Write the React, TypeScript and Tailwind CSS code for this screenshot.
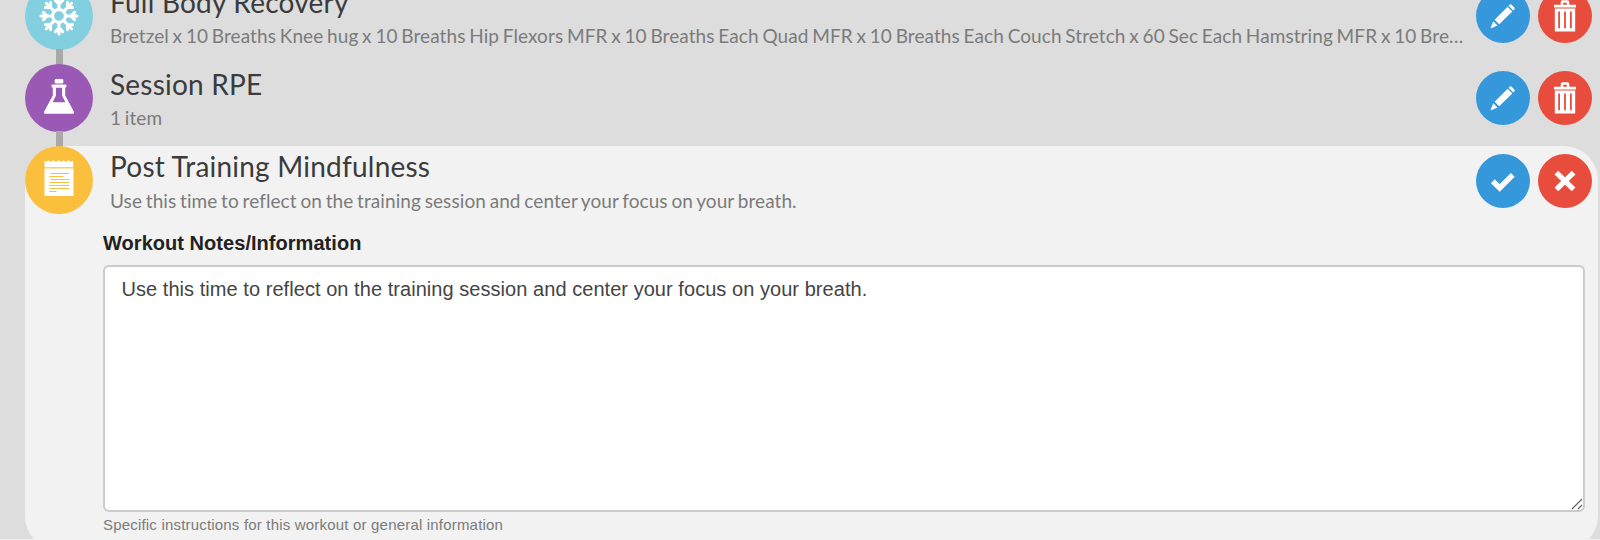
import { useState } from 'react';
import type { ReactNode } from 'react';

type IconProps = { className?: string };

function SnowflakeIcon({ className }: IconProps) {
  return (
    <svg viewBox="-20 -20 40 40" className={className} fill="none" stroke="currentColor" strokeWidth="3.1" strokeLinecap="round">
      <circle r="6.4" />
      {[0, 45, 90, 135, 180, 225, 270, 315].map((deg) => (
        <path key={deg} transform={`rotate(${deg})`} d="M0-7V-18M-3.6-15.6L0-12L3.6-15.6" />
      ))}
    </svg>
  );
}

function FlaskIcon({ className }: IconProps) {
  return (
    <svg viewBox="0 0 40 40" className={className} fill="currentColor">
      <rect x="15.7" y="1" width="8.6" height="4.6" rx="1.4" />
      <rect x="12.6" y="6.6" width="14.8" height="3" rx="0.8" />
      <path
        fillRule="evenodd"
        d="M13.8 9H26.2V17.5L34.8 33.4Q35.6 35.7 33.4 35.7H6.6Q4.4 35.7 5.2 33.4L13.8 17.5ZM16.9 9.6V17.8L13.6 24.2H26.4L23.1 17.8V9.6Z"
      />
    </svg>
  );
}

function NoteIcon({ className }: IconProps) {
  return (
    <svg viewBox="0 0 30 36" className={className} fill="currentColor">
      <path d="M.5.5L2.2 2 4 .5H5L7 2 9 .5H10L12 2 14 .5H15L17 2 19 .5H20L22 2 24 .5H25L27 2 29.2.5V7.3H.5Z" />
      <path d="M.5 8.4H29.5V36H.5Z" />
      <path
        className="stroke-[#fabf3d]"
        strokeWidth="1.2"
        d="M6.5 13.5H25M5.3 16.5H19.5M6.5 19.5H25M5.3 22.5H25M5.3 25.5H25M5.3 28.5H25M5.3 31.5H12.5"
      />
    </svg>
  );
}

function PencilIcon({ className }: IconProps) {
  return (
    <svg viewBox="0 0 26 26" className={className} fill="currentColor">
      <path d="M19.6 1.7Q20.5.6 21.6 1.7L24.3 4.4Q25.4 5.5 24.3 6.5L23.3 7.5L18.6 2.8Z" />
      <path d="M17.6 3.8L22.3 8.5L9.2 21.3L4.6 16.8Z" />
      <path d="M3.3 18.2L7.5 22.5L1.2 25.2Q.4 25.3.7 24.5Z" />
    </svg>
  );
}

function TrashIcon({ className }: IconProps) {
  return (
    <svg viewBox="0 0 24 32" className={className} fill="currentColor">
      <path d="M1 4.8H7.7V2Q7.7.3 9.4.3H14.6Q16.3.3 16.3 2V4.8H23V7.4H1ZM10.2 2.8V4.8H13.8V2.8Z" fillRule="evenodd" />
      <path fillRule="evenodd" d="M1.8 8.4H22.2V31.6H1.8ZM5.2 11.5V28.2H7V11.5ZM11.1 11.5V28.2H12.9V11.5ZM17 11.5V28.2H18.8V11.5Z" />
    </svg>
  );
}

function CheckIcon({ className }: IconProps) {
  return (
    <svg viewBox="0 0 26 22" className={className} fill="none" stroke="currentColor" strokeWidth="5.4" strokeLinejoin="miter">
      <path d="M2.8 10.3L9.7 16.9L22.8 3.9" />
    </svg>
  );
}

function CrossIcon({ className }: IconProps) {
  return (
    <svg viewBox="0 0 24 24" className={className} fill="none" stroke="currentColor" strokeWidth="5.8">
      <path d="M2.6 2.8L21.4 21.2M21.4 2.8L2.6 21.2" />
    </svg>
  );
}

function RoundButton({ color, label, children }: { color: string; label: string; children: ReactNode }) {
  return (
    <button aria-label={label} className={`flex size-[54px] shrink-0 items-center justify-center rounded-full text-white ${color}`}>
      {children}
    </button>
  );
}

type RowProps = {
  icon: ReactNode;
  color: string;
  title: string;
  summary: string;
  actions: ReactNode;
  last?: boolean;
};

function WorkoutRow({ icon, color, title, summary, actions, last }: RowProps) {
  return (
    <div className="flex h-[82.3px] items-start pr-[6px]">
      <div className="flex h-full w-[68px] shrink-0 flex-col items-center">
        <div className={`flex size-[68px] shrink-0 items-center justify-center rounded-full text-white ${color}`}>{icon}</div>
        {!last && <div className="-mt-px ml-px h-4 w-[7px] shrink-0 bg-[#a9a9a9]" />}
      </div>
      <div className="ml-[17px] min-w-0 flex-1 font-[Lato,sans-serif]">
        <h2 className="mt-[3px] text-[28px] leading-[34px] tracking-[0.22px] text-[#3b3b3b]">{title}</h2>
        <p className="mt-[4.2px] truncate text-[19px] leading-[26px] tracking-[0.08px] [word-spacing:-1.2px] text-[#7b7b7b]">{summary}</p>
      </div>
      <div className="mt-[7.2px] ml-[10px] flex gap-[8px]">{actions}</div>
    </div>
  );
}

const editActions = (
  <>
    <RoundButton color="bg-[#3498db]" label="Edit">
      <PencilIcon className="size-[26px]" />
    </RoundButton>
    <RoundButton color="bg-[#e74c3c]" label="Delete">
      <TrashIcon className="h-[32px] w-[24px]" />
    </RoundButton>
  </>
);

const saveActions = (
  <>
    <RoundButton color="bg-[#3498db]" label="Save">
      <CheckIcon className="mt-[2px] h-[22px] w-[26px]" />
    </RoundButton>
    <RoundButton color="bg-[#e74c3c]" label="Cancel">
      <CrossIcon className="size-[22px]" />
    </RoundButton>
  </>
);

export default function App() {
  const [notes, setNotes] = useState('Use this time to reflect on the training session and center your focus on your breath.');

  return (
    <div className="h-[540px] w-[1600px] overflow-hidden border-b border-[#f2f2f2] bg-[#ddd]">
      <div className="-mt-[18.2px] ml-[25px] w-[1573px]">
        <WorkoutRow
          icon={<SnowflakeIcon className="size-[40px]" />}
          color="bg-[#82cfe0]"
          title="Full Body Recovery"
          summary="Bretzel x 10 Breaths Knee hug x 10 Breaths Hip Flexors MFR x 10 Breaths Each Quad MFR x 10 Breaths Each Couch Stretch x 60 Sec Each Hamstring MFR x 10 Breaths Each"
          actions={editActions}
        />
        <WorkoutRow
          icon={<FlaskIcon className="size-[40px]" />}
          color="bg-[#9b59b6]"
          title="Session RPE"
          summary="1 item"
          actions={editActions}
        />
        <div className="h-[404px] rounded-[34px] bg-[#f2f2f2]">
          <WorkoutRow
            icon={<NoteIcon className="mb-[4px] h-[36px] w-[30px]" />}
            color="bg-[#fabf3d]"
            title="Post Training Mindfulness"
            summary="Use this time to reflect on the training session and center your focus on your breath."
            actions={saveActions}
            last
          />
          <div className="mr-[13px] ml-[78px] font-['Liberation_Sans',sans-serif]">
            <label htmlFor="notes" className="block text-[20px] leading-[28px] font-bold tracking-[0.04px] text-[#222]">
              Workout Notes/Information
            </label>
            <div className="relative mt-[8px]">
              <textarea
                id="notes"
                value={notes}
                onChange={(e) => setNotes(e.target.value)}
                className="block h-[247px] w-full resize-none rounded-[6px] border-2 border-[#ccc] bg-white px-[16.5px] py-[8px] text-[20px] leading-[28px] tracking-[0.05px] text-[#444] outline-none"
              />
              <svg viewBox="0 0 12 12" className="absolute right-[2px] bottom-[2px] size-[12px]" fill="none" stroke="#666">
                <path d="M1 11L11 1M7 11L11 7" strokeWidth="1.2" />
              </svg>
            </div>
            <p className="mt-[3px] text-[15px] leading-[20px] tracking-[0.19px] text-[#7b7b7b]">
              Specific instructions for this workout or general information
            </p>
          </div>
        </div>
      </div>
    </div>
  );
}
